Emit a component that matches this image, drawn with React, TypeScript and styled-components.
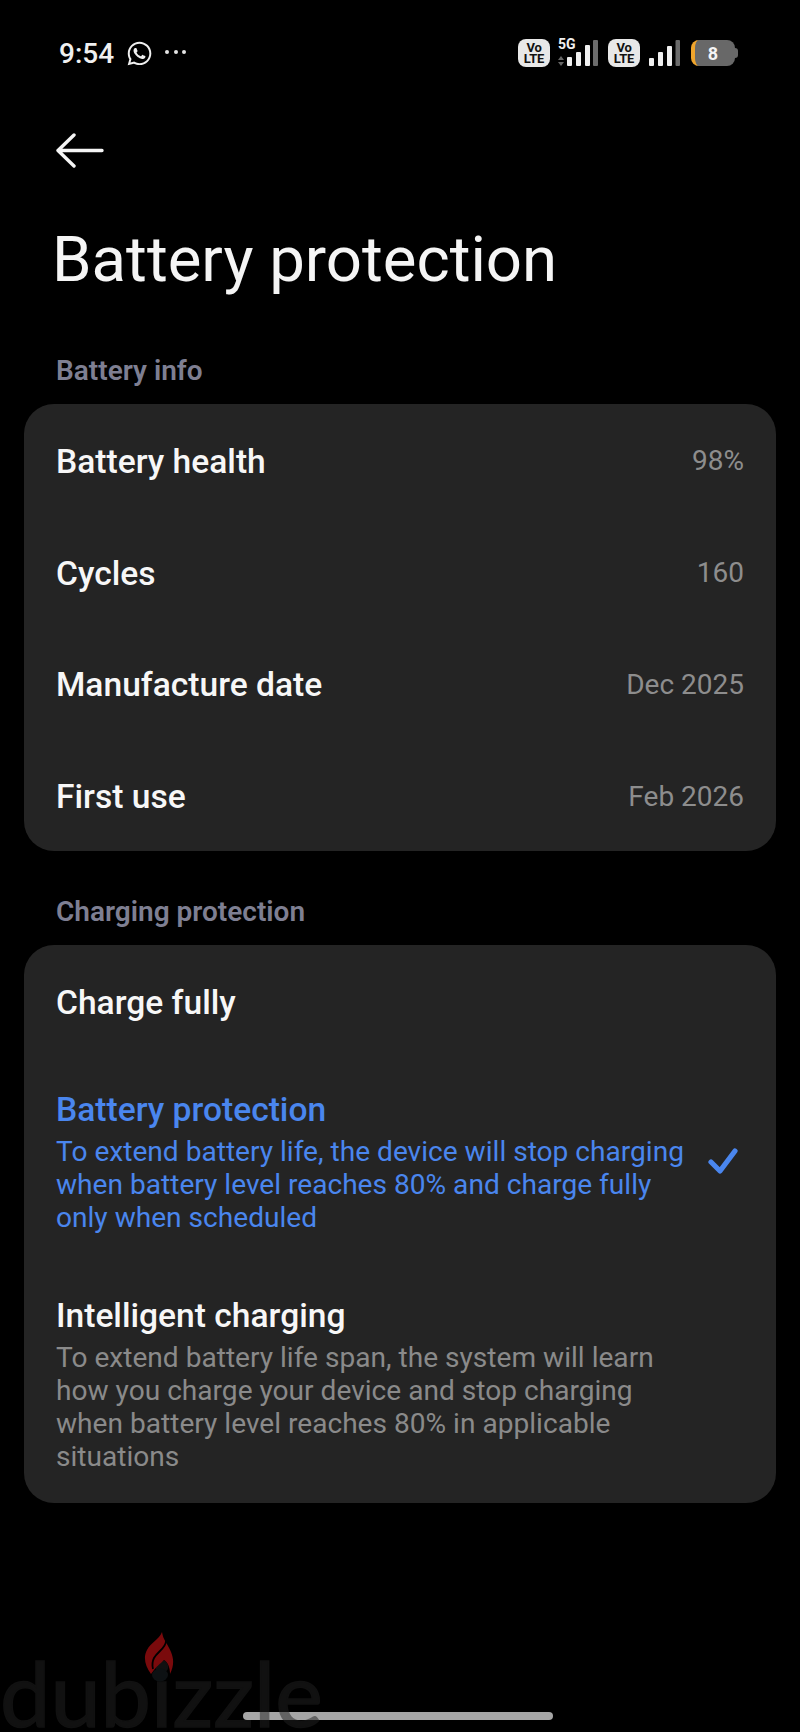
import React from "react";
import styled, { createGlobalStyle } from "styled-components";
import { FaWhatsapp } from "react-icons/fa";

const GlobalStyle = createGlobalStyle`
  html, body {
    margin: 0;
    background: #000;
  }
  * {
    box-sizing: border-box;
  }
`;

const Page = styled.div`
  position: relative;
  width: 800px;
  height: 1732px;
  overflow: hidden;
  background: #000;
  font-family: Roboto, "Liberation Sans", sans-serif;
  color: #fff;
`;

const StatusBar = styled.div`
  display: flex;
  align-items: center;
  height: 106px;
  padding: 0 63px 0 59px;
`;

const Time = styled.span`
  font-size: 28px;
  font-weight: 500;
  color: #f0f0f0;
`;

const WhatsApp = styled(FaWhatsapp)`
  margin-left: 12px;
  font-size: 27px;
  color: #f0f0f0;
`;

const Dots = styled.div`
  display: flex;
  gap: 4.5px;
  margin-left: 12px;
  margin-bottom: 3px;
`;

const Dot = styled.i`
  width: 4px;
  height: 4px;
  border-radius: 50%;
  background: #e4e4e4;
`;

const StatusRight = styled.div`
  display: flex;
  align-items: center;
  margin-left: auto;
`;

const VoLte = styled.div`
  display: flex;
  flex-direction: column;
  align-items: center;
  justify-content: center;
  width: 32px;
  height: 28px;
  border-radius: 8px;
  background: #e8e8e8;
  color: #111;
  font-size: 13px;
  font-weight: 700;
  line-height: 11.5px;
  letter-spacing: -0.2px;
`;

const SignalBlock = styled.div`
  position: relative;
  width: 41px;
  height: 26px;
  margin: 0 10px 0 7px;
`;

const FiveG = styled.span`
  position: absolute;
  left: 1px;
  top: -2px;
  font-size: 14px;
  font-weight: 700;
  line-height: 12px;
  color: #f0f0f0;
`;

const Signal = styled.svg<{ $gap?: number }>`
  display: block;
  margin-left: ${(p) => p.$gap ?? 0}px;
`;

const Battery = styled.div`
  display: flex;
  align-items: center;
  justify-content: center;
  position: relative;
  width: 44px;
  height: 26px;
  margin: 0 2px 0 11px;
  padding-right: 4px;
  border-radius: 8px;
  border-left: 4px solid #f0a52c;
  background: #686868;
  font-size: 18px;
  font-weight: 700;
  color: #f5f5f5;
  &::after {
    content: "";
    position: absolute;
    right: -3px;
    top: 8px;
    width: 3px;
    height: 10px;
    border-radius: 0 3px 3px 0;
    background: #686868;
  }
`;

const BackRow = styled.div`
  display: flex;
  align-items: center;
  height: 50px;
  margin-top: 20px;
  padding-left: 56px;
`;

const Title = styled.h1`
  margin: 44px 0 0;
  padding-left: 52px;
  font-size: 63.5px;
  font-weight: 400;
  line-height: 80px;
  color: #f5f5f5;
`;

const SectionLabel = styled.div<{ $first?: boolean }>`
  height: 36px;
  margin-top: ${(p) => (p.$first ? 52 : 42)}px;
  padding-left: 56px;
  font-size: 28px;
  font-weight: 600;
  line-height: 37px;
  color: #7e7f92;
`;

const Card = styled.section`
  margin: 16px 24px 0;
  border-radius: 30px;
  background: #242424;
`;

const InfoRow = styled.div`
  display: flex;
  align-items: center;
  justify-content: space-between;
  height: 111.75px;
  padding: 4px 32px 0;
`;

const Label = styled.div<{ $active?: boolean }>`
  font-size: 33.6px;
  font-weight: 500;
  line-height: 36px;
  color: ${(p) => (p.$active ? "#4a86ee" : "#f7f7f7")};
`;

const Value = styled.div`
  margin-bottom: 2px;
  font-size: 28px;
  color: #8d8d8d;
`;

const OptionRow = styled.div`
  display: flex;
  align-items: center;
  justify-content: space-between;
  padding: 35px 38px 29px 32px;
  &:last-child {
    padding-bottom: 30px;
  }
`;

const Desc = styled.div<{ $active?: boolean }>`
  width: 640px;
  margin-top: 7px;
  font-size: 28.1px;
  line-height: 33.1px;
  color: ${(p) => (p.$active ? "#4a86ee" : "#8a8a8a")};
`;

const Check = styled.svg`
  margin-bottom: 4px;
`;

const Watermark = styled.div`
  position: absolute;
  left: 0;
  bottom: 0;
  font-family: Lato, sans-serif;
  font-size: 90px;
  line-height: 80px;
  color: #222;
  -webkit-text-stroke: 1.5px #222;
  opacity: 0.5;
`;

const Flame = styled.svg`
  position: absolute;
  left: 144px;
  top: 1632px;
`;

const HomeBar = styled.div`
  position: absolute;
  left: 243px;
  top: 1712px;
  width: 310px;
  height: 8px;
  border-radius: 4px;
  background: #a6a6a6;
`;

const Badge = () => (
  <VoLte>
    <span>Vo</span>
    <span>LTE</span>
  </VoLte>
);

const App = () => (
  <Page>
    <GlobalStyle />
    <StatusBar>
      <Time>9:54</Time>
      <WhatsApp />
      <Dots>
        <Dot />
        <Dot />
        <Dot />
      </Dots>
      <StatusRight>
        <Badge />
        <SignalBlock>
          <FiveG>5G</FiveG>
          <Signal width="41" height="26" viewBox="0 0 41 26">
            <path d="M1 20l3-4 3 4zM1 22l3 4 3-4z" fill="#666" />
            <rect x="10" y="17" width="5" height="9" rx="1" fill="#f0f0f0" />
            <rect x="19" y="12" width="5" height="14" rx="1" fill="#f0f0f0" />
            <rect x="28" y="5" width="5" height="21" rx="1" fill="#f0f0f0" />
            <rect x="36" y="0" width="5" height="26" rx="1" fill="#6b6b6b" />
          </Signal>
        </SignalBlock>
        <Badge />
        <Signal $gap={9} width="31" height="26" viewBox="0 0 31 26">
          <rect x="0" y="18" width="5" height="8" rx="1" fill="#f0f0f0" />
          <rect x="9" y="12" width="5" height="14" rx="1" fill="#f0f0f0" />
          <rect x="18" y="6" width="5" height="20" rx="1" fill="#f0f0f0" />
          <rect x="26.5" y="0" width="4.5" height="26" rx="1" fill="#6b6b6b" />
        </Signal>
        <Battery>8</Battery>
      </StatusRight>
    </StatusBar>

    <BackRow>
      <svg width="48" height="36" viewBox="0 0 48 36" fill="none" stroke="#f5f5f5" strokeWidth="3.4" strokeLinecap="round" strokeLinejoin="round">
        <path d="M46 17.5H2M18 2L2 17.5 18 33" />
      </svg>
    </BackRow>

    <Title>Battery protection</Title>

    <SectionLabel $first>Battery info</SectionLabel>
    <Card>
      <InfoRow>
        <Label>Battery health</Label>
        <Value>98%</Value>
      </InfoRow>
      <InfoRow>
        <Label>Cycles</Label>
        <Value>160</Value>
      </InfoRow>
      <InfoRow>
        <Label>Manufacture date</Label>
        <Value>Dec 2025</Value>
      </InfoRow>
      <InfoRow>
        <Label>First use</Label>
        <Value>Feb 2026</Value>
      </InfoRow>
    </Card>

    <SectionLabel>Charging protection</SectionLabel>
    <Card>
      <InfoRow>
        <Label>Charge fully</Label>
      </InfoRow>
      <OptionRow>
        <div>
          <Label $active>Battery protection</Label>
          <Desc $active>
            To extend battery life, the device will stop charging when battery level reaches 80% and charge fully only when scheduled
          </Desc>
        </div>
        <Check width="30" height="26" viewBox="0 0 30 26" fill="none" stroke="#4a86ee" strokeWidth="5.2" strokeLinecap="round" strokeLinejoin="round">
          <path d="M3 14l9 9L27 3" />
        </Check>
      </OptionRow>
      <OptionRow>
        <div>
          <Label>Intelligent charging</Label>
          <Desc>
            To extend battery life span, the system will learn how you charge your device and stop charging when battery level reaches 80% in applicable situations
          </Desc>
        </div>
      </OptionRow>
    </Card>

    <HomeBar />
    <Watermark>dubizzle</Watermark>
    <Flame width="30" height="50" viewBox="0 0 30 50">
      <path d="M18 0C19 8 24 12 27 20C30 27 30 34 26 42C26 36 24 30 20 28C17 31 14 33 10 38L7 42C1 34 -1 25 3 18C7 10 15 8 18 0Z" fill="#7a0a0c" />
      <path d="M22 9C22 16 14 19 10 26C8 30 8 33 9 37" fill="none" stroke="#000" strokeWidth="1.8" />
      <ellipse cx="16" cy="43" rx="8" ry="6.5" fill="#0d1113" />
    </Flame>
  </Page>
);

export default App;
